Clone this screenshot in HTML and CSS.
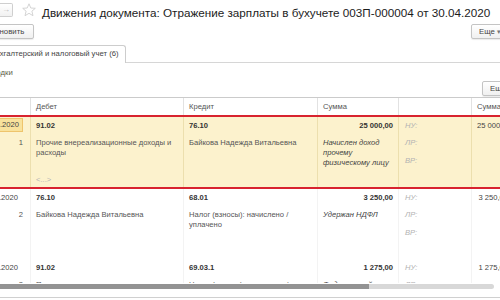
FILE: index.html
```html
<!DOCTYPE html>
<html lang="ru">
<head>
<meta charset="utf-8">
<title>Движения документа</title>
<link rel="stylesheet" href="styles.css">
</head>
<body>
<div class="page">
  <header class="titlebar">
    <div class="nav">
      <span class="navbtn">&#8592;</span><span class="navbtn">&#8594;</span>
    </div>
    <svg class="star" viewBox="0 0 14 14" width="14" height="14"><polygon points="7,0.8 8.8,5 13.3,5.3 9.9,8.2 11,12.7 7,10.3 3,12.7 4.1,8.2 0.7,5.3 5.2,5" fill="none" stroke="#cfcfcf" stroke-width="0.9" stroke-linejoin="round"/></svg>
    <h1 class="title">Движения документа: Отражение зарплаты в бухучете 003П-000004 от 30.04.2020</h1>
  </header>

  <div class="toolbar">
    <button class="btn refresh">Обновить</button>
    <button class="btn more more-top">Еще <span class="caret">&#9662;</span></button>
  </div>

  <div class="tabs">
    <div class="tab">Бухгалтерский и налоговый учет (6)</div>
  </div>

  <div class="section-title">Проводки</div>
  <div class="section-bar">
    <button class="btn more more-table">Еще <span class="caret">&#9662;</span></button>
  </div>

  <div class="table">
    <div class="thead">
      <div class="th"></div>
      <div class="th">Дебет</div>
      <div class="th">Кредит</div>
      <div class="th">Сумма</div>
      <div class="th"></div>
      <div class="th">Сумма</div>
    </div>

    <div class="rec selected">
      <div class="c date"><span class="cur">30.04.2020</span></div>
      <div class="c acc">91.02</div>
      <div class="c acc">76.10</div>
      <div class="c sum">25 000,00</div>
      <div class="c lbl">НУ:</div>
      <div class="c nusum">25 000,00</div>
      <div class="c num">1</div>
      <div class="c sub">Прочие внереализационные доходы и расходы<div class="more-sub">&lt;...&gt;</div></div>
      <div class="c sub">Байкова Надежда Витальевна</div>
      <div class="c content">Начислен доход прочему физическому лицу</div>
      <div class="c lbl2"><div>ЛР:</div><div class="vr">ВР:</div></div>
      <div class="c"></div>
    </div>

    <div class="rec">
      <div class="c date">30.04.2020</div>
      <div class="c acc">76.10</div>
      <div class="c acc">68.01</div>
      <div class="c sum">3 250,00</div>
      <div class="c lbl">НУ:</div>
      <div class="c nusum">3 250,00</div>
      <div class="c num">2</div>
      <div class="c sub">Байкова Надежда Витальевна</div>
      <div class="c sub">Налог (взносы): начислено / уплачено</div>
      <div class="c content">Удержан НДФЛ</div>
      <div class="c lbl2"><div>ЛР:</div><div class="vr">ВР:</div></div>
      <div class="c"></div>
    </div>

    <div class="rec">
      <div class="c date">30.04.2020</div>
      <div class="c acc">91.02</div>
      <div class="c acc">69.03.1</div>
      <div class="c sum">1 275,00</div>
      <div class="c lbl">НУ:</div>
      <div class="c nusum">1 275,00</div>
      <div class="c num">3</div>
      <div class="c sub">Прочие внереализационные доходы и расходы</div>
      <div class="c sub">Налог (взносы): начислено / уплачено</div>
      <div class="c content">Федеральный фонд ОМС</div>
      <div class="c lbl2"><div>ЛР:</div><div class="vr">ВР:</div></div>
      <div class="c"></div>
    </div>
  </div>

  <div class="hbar"></div>
  <div class="bottom-line"></div>
</div>
</body>
</html>
```

FILE: styles.css
```css
* { box-sizing: border-box; }
html, body { margin: 0; padding: 0; }
body {
  width: 500px;
  height: 300px;
  overflow: hidden;
  background: #fff;
  font-family: "Liberation Sans", Arial, sans-serif;
  font-size: 7.6px;
  color: #333;
}
.page {
  width: 560px;
  margin-left: -27px;
}

/* title bar */
.titlebar {
  display: flex;
  align-items: center;
  height: 20px;
  padding-top: 3px;
  padding-bottom: 3px;
}
.nav {
  display: flex;
  margin-left: 14px;
}
.navbtn {
  width: 13px;
  height: 14px;
  border: 1px solid #cfcfcf;
  background: linear-gradient(#ffffff, #f1f1f1);
  color: #b8b8b8;
  font-size: 8px;
  line-height: 12px;
  text-align: center;
}
.navbtn + .navbtn { border-left: none; border-radius: 0 2px 2px 0; }
.navbtn:first-child { border-radius: 2px 0 0 2px; }
.star {
  margin-left: 9px;
  flex: none;
}
.title {
  margin: 0 0 0 6px;
  font-size: 11.7px;
  font-weight: normal;
  color: #1c1c1c;
  white-space: nowrap;
  position: relative;
  top: 2px;
}

/* buttons */
.btn {
  height: 15px;
  padding: 0 7px;
  border: 1px solid #c4c4c4;
  border-radius: 2px;
  background: linear-gradient(#ffffff, #f0f0f0);
  box-shadow: 0 1px 1px rgba(0,0,0,0.08);
  font-family: inherit;
  font-size: 7.8px;
  color: #444;
  line-height: 13px;
  white-space: nowrap;
}
.refresh { padding: 0 9px 0 7px; }
.caret { color: #777; font-size: 7px; }

.toolbar {
  display: flex;
  justify-content: space-between;
  margin-top: 4px;
  padding-left: 8px;
  height: 15px;
}
.more { width: 40px; text-align: left; }
.more-top { margin-right: 22px; }
.more-table { margin-right: 11px; }

/* tabs */
.tabs {
  display: flex;
  margin-top: 6px;
  padding-left: 8px;
  border-bottom: 1px solid #d6d6d6;
  height: 18px;
}
.tab {
  height: 18px;
  padding: 0 6px 0 9px;
  border: 1px solid #cdcdcd;
  border-bottom: none;
  border-radius: 3px 3px 0 0;
  background: #fff;
  color: #444;
  font-size: 7.7px;
  line-height: 16px;
  margin-bottom: -1px;
  white-space: nowrap;
}

.section-title {
  margin-top: 4px;
  padding-left: 5px;
  height: 12px;
  line-height: 12px;
  font-size: 7.8px;
  color: #5e5e48;
}
.section-bar {
  display: flex;
  justify-content: flex-end;
  margin-top: 2px;
  height: 15px;
}

/* table */
.table {
  margin-top: 1px;
  height: 186px;
  overflow: hidden;
  border-top: 1px solid #cbcbcb;
}
.thead, .rec {
  display: grid;
  grid-template-columns: 57px 153px 134px 81px 73px 42px;
}
.thead {
  height: 17px;
}
.th {
  padding-left: 5px;
  line-height: 17px;
  color: #555;
  border-left: 1px solid #e2e2e2;
  white-space: nowrap;
}
.th:first-child { border-left: none; }

.rec {
  grid-template-rows: 17px auto;
  height: 70px;
}
.rec.selected {
  height: 74px;
  background: #fcf2cd;
  border-top: 2px solid #d8232f;
  border-bottom: 2px solid #d8232f;
}
.c {
  padding: 0 5px;
  border-left: 1px solid #f3f3f3;
  white-space: normal;
}
.selected .c { border-left-color: #ecdfae; }
.c.date, .c.num { border-left: none; }
.selected .c.date, .selected .c.num { border-left: none; }
.date {
  line-height: 17px;
  padding-left: 7px;
  color: #444;
}
.cur {
  display: block;
  height: 14px;
  margin: 1px 2px 2px -5px;
  padding-left: 5px;
  line-height: 12px;
  background: #f8e29c;
  border: 1px solid #eec46c;
}
.acc, .sum {
  font-weight: bold;
  line-height: 17px;
  color: #333;
}
.sum { text-align: right; }
.lbl, .lbl2 {
  font-style: italic;
  color: #b3b3b3;
  padding-left: 6px;
}
.lbl { line-height: 17px; }
.nusum {
  line-height: 17px;
  text-align: right;
  color: #444;
  white-space: nowrap;
}
.num {
  text-align: right;
  padding: 4px 7px 0 0;
  line-height: 10px;
  color: #555;
}
.sub {
  padding-top: 4px;
  line-height: 10px;
  color: #555;
}
.more-sub {
  margin-top: 17px;
  color: #b5b5b5;
}
.content {
  padding-top: 4px;
  line-height: 10px;
  font-style: italic;
  color: #444;
}
.lbl2 {
  padding-top: 4px;
  line-height: 10px;
}
.vr { margin-top: 8px; }

/* horizontal scroll indicator */
.hbar {
  width: 521px;
  height: 5px;
  margin-top: 1px;
  border-radius: 3px;
  background: linear-gradient(to right, #939393 0, #939393 396px, #d8d8d8 396px, #d8d8d8 100%);
}
.bottom-line {
  margin-top: 8px;
  border-top: 1px solid #d0d0d0;
}
```
